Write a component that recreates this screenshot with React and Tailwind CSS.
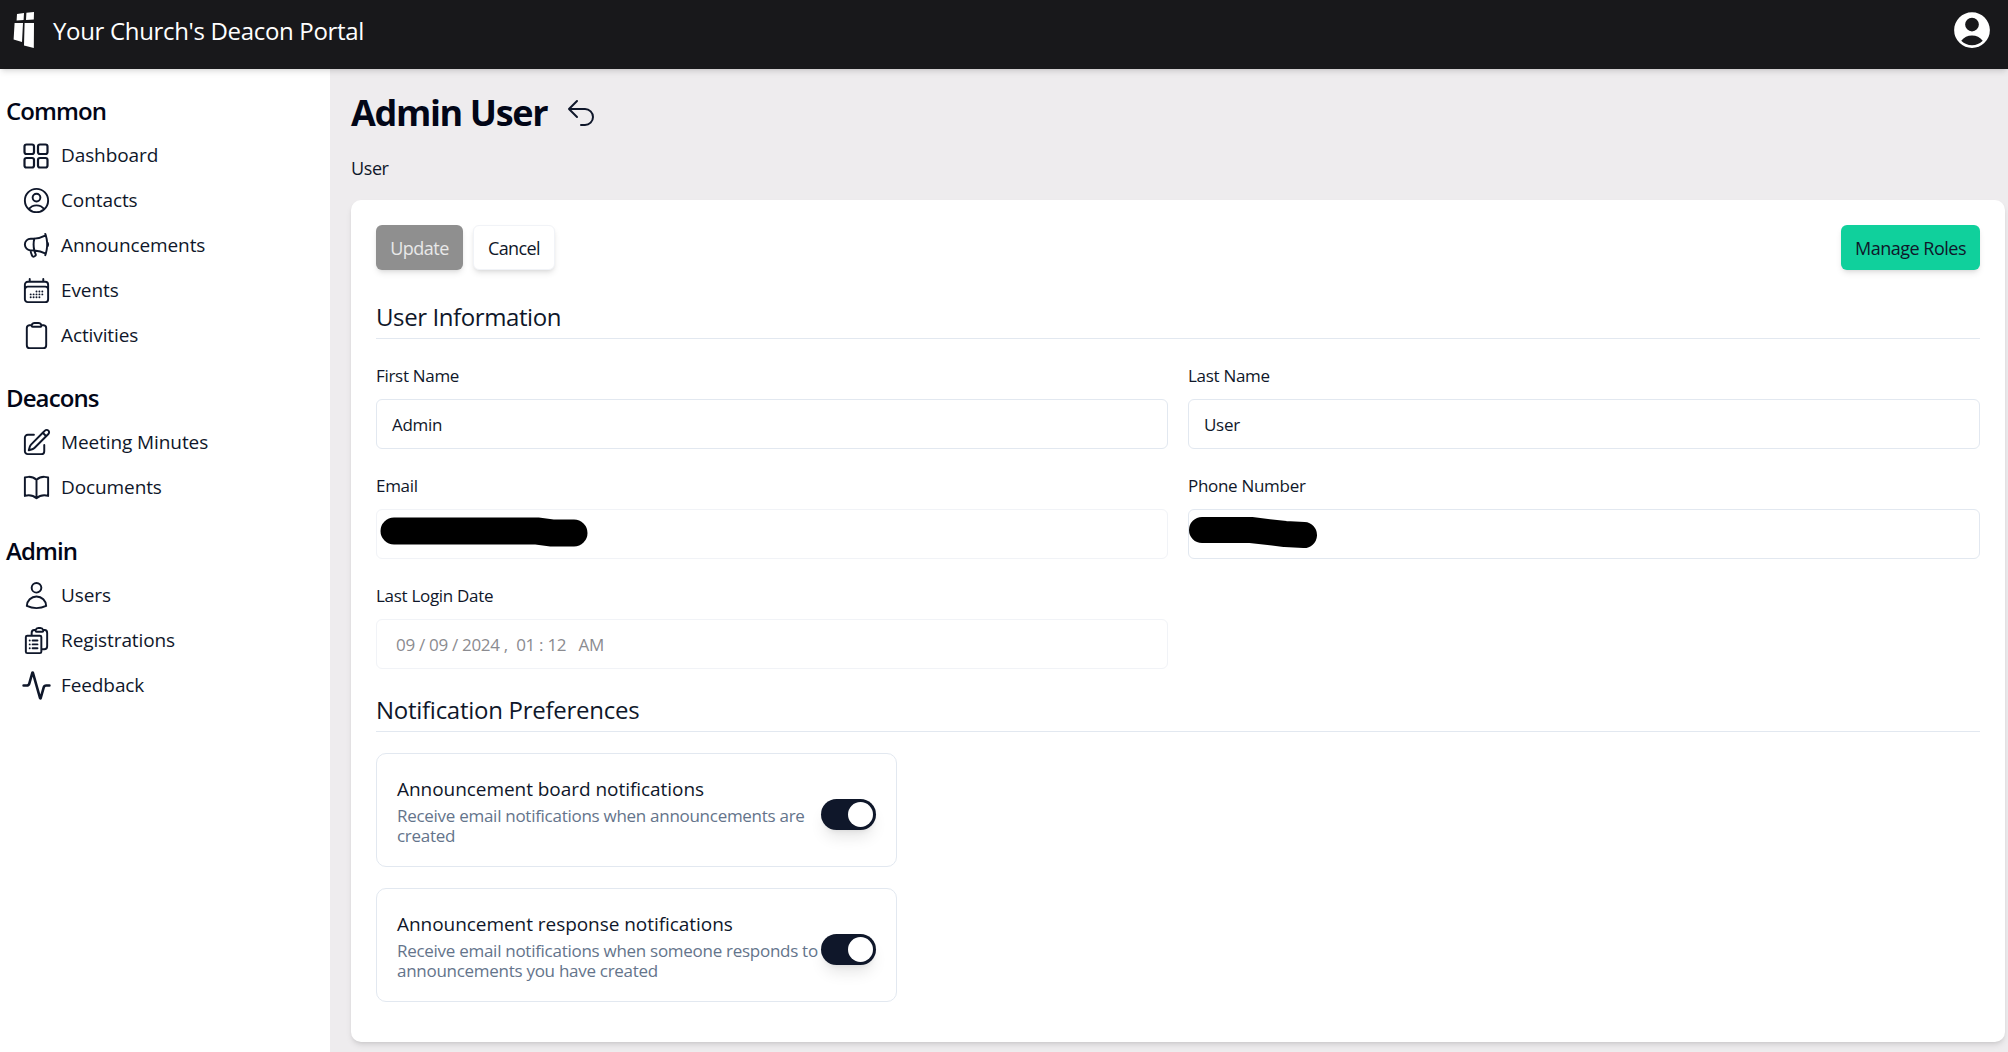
import React from "react";
import { HiOutlineUserCircle, HiOutlineMegaphone, HiOutlineCalendarDays, HiOutlineClipboard, HiOutlinePencilSquare, HiOutlineBookOpen, HiOutlineUser, HiOutlineClipboardDocumentList, HiOutlineArrowUturnLeft, HiUserCircle } from "react-icons/hi2";
import { Activity } from "lucide-react";

function DashIcon() {
  return (
    <svg width="28" height="28" viewBox="0 0 28 28" fill="none" stroke="currentColor" strokeWidth="2.2">
      <rect x="2.5" y="2.5" width="9.5" height="9.5" rx="2" />
      <rect x="16" y="2.5" width="9.5" height="9.5" rx="2" />
      <rect x="2.5" y="16" width="9.5" height="9.5" rx="2" />
      <rect x="16" y="16" width="9.5" height="9.5" rx="2" />
    </svg>
  );
}

const groups = [
  { title: "Common", cls: "mt-[20px]", items: [
    ["Dashboard", DashIcon], ["Contacts", HiOutlineUserCircle], ["Announcements", HiOutlineMegaphone], ["Events", HiOutlineCalendarDays], ["Activities", HiOutlineClipboard] ] },
  { title: "Deacons", cls: "mt-[18px]", items: [ ["Meeting Minutes", HiOutlinePencilSquare], ["Documents", HiOutlineBookOpen] ] },
  { title: "Admin", cls: "mt-[19px]", items: [ ["Users", HiOutlineUser], ["Registrations", HiOutlineClipboardDocumentList], ["Feedback", Activity] ] },
];

function Field({ label, value, disabled, light, children }) {
  return (
    <div className="flex flex-col">
      <label className="text-[17px] leading-[24px] text-[#0f172a] tracking-[-0.3px]">{label}</label>
      <div className={`relative mt-[11px] h-[50px] rounded-[6px] border bg-white flex items-center pt-[2px] px-[15px] text-[17px] tracking-[-0.3px] whitespace-pre ${disabled ? "border-[#f1f3f7] text-[#8b8b90] pl-[19px]" : light ? "border-[#f1f3f7] text-[#0f172a]" : "border-[#e2e8f0] text-[#0f172a]"}`}>
        {value}
        {children}
      </div>
    </div>
  );
}

function Pref({ title, desc, mt }) {
  return (
    <div className={`relative rounded-[10px] border border-[#e2e8f0] ${mt} w-[521px] h-[114px] pl-[20px] pt-[2px] flex flex-col justify-center`}>
      <div className="text-[19px] leading-[26px] text-[#0f172a] tracking-[-0.05px] mb-[4px]">{title}</div>
      <div className="text-[17px] leading-[20px] text-[#64748b] w-[428px] tracking-[-0.28px]">{desc}</div>
      <div className="absolute right-[20px] top-[45px] h-[31px] w-[55px] rounded-full bg-[#0f172a] shadow-lg">
        <div className="absolute right-[3px] top-[3px] h-[25px] w-[25px] rounded-full bg-white" />
      </div>
    </div>
  );
}

export default function App() {
  return (
    <div className="h-screen w-full flex flex-col overflow-hidden bg-white font-['Open_Sans','Noto_Sans',sans-serif] text-[#0f172a]">
      <header className="relative z-10 h-[69px] shrink-0 bg-[#18181b] shadow-md flex items-center justify-between pl-[13px] pr-[14px]">
        <div className="flex items-center">
          <svg width="24" height="38" viewBox="0 0 24 38" className="mb-[8px]">
            <path d="M4 2 L11 1 L10.6 8 L3.6 8.4 Z M13.4 0.8 L21 0 L20.8 7.6 L13 8 Z M1.6 11 L10 11 L9 30 L0.6 27.4 Z M11.6 11 L21 11 L20.8 36 L11 33.4 Z" fill="#fff" />
          </svg>
          <span className="ml-[16px] mb-[8px] text-[24px] leading-[32px] text-white tracking-[-0.33px]">Your Church's Deacon Portal</span>
        </div>
        <HiUserCircle className="text-white mb-[10px]" size={44} />
      </header>
      <div className="flex-1 flex min-h-0">
        <aside className="w-[330px] shrink-0 bg-white flex flex-col pl-[6px]">
          {groups.map((g) => (
            <div key={g.title} className={g.cls}>
              <div className="text-[24px] leading-[44px] font-semibold text-[#020617] tracking-[-0.9px]">{g.title}</div>
              {g.items.map(([name, Icon]) => (
                <div key={name} className="h-[45px] flex items-center pl-[16px] text-[#0f172a]">
                  <span className="w-[28px] h-[28px] flex items-center justify-center"><Icon size={31} className="shrink-0" /></span>
                  <span className="ml-[11px] text-[19px] tracking-[-0.1px]">{name}</span>
                </div>
              ))}
            </div>
          ))}
        </aside>
        <main className="flex-1 bg-[#eeecee] pl-[21px] pr-[3px] flex flex-col">
          <div className="flex items-center h-[48px] mt-[20px]">
            <h1 className="text-[36px] leading-[48px] font-bold text-[#020617] tracking-[-1.35px]">Admin User</h1>
            <HiOutlineArrowUturnLeft size={32} className="ml-[18px]" />
          </div>
          <div className="text-[18px] leading-[26px] mt-[18px] tracking-[-0.4px]">User</div>
          <section className="mt-[19px] h-[842px] rounded-[10px] bg-white shadow-md px-[25px] pt-[25px]">
            <div className="flex items-start justify-between">
              <div className="flex gap-[10px]">
                <button className="h-[45px] w-[87px] pt-[2px] rounded-[6px] bg-[#8f8f8f] text-white/80 text-[18px] tracking-[-0.5px] shadow-md">Update</button>
                <button className="h-[45px] w-[82px] pt-[2px] rounded-[6px] border border-[#f1f3f7] bg-white text-[18px] tracking-[-0.6px] shadow-md">Cancel</button>
              </div>
              <button className="h-[45px] w-[139px] pt-[2px] rounded-[6px] bg-[#10d09c] text-[18px] text-[#0f172a] tracking-[-0.5px] shadow-md">Manage Roles</button>
            </div>
            <h2 className="mt-[31px] pb-[4px] border-b border-[#e2e8f0] text-[24px] leading-[32px] h-[33px] box-content tracking-[-0.4px]">User Information</h2>
            <div className="mt-[25px] grid grid-cols-2 gap-x-[20px] gap-y-[25px]">
              <Field label="First Name" value="Admin" />
              <Field label="Last Name" value="User" />
              <Field label="Email" value="" light>
                <svg width="220" height="48" viewBox="0 0 220 48" className="absolute left-0 top-0" fill="none">
                  <path d="M17 21 L160 21 L175 23 L197 23" stroke="#000" strokeWidth="27" strokeLinecap="round" strokeLinejoin="round" />
                </svg>
              </Field>
              <Field label="Phone Number" value="">
                <svg width="140" height="48" viewBox="0 0 140 48" className="absolute left-0 top-0" fill="none">
                  <path d="M13 20 L62 20 L96 24 L115 25" stroke="#000" strokeWidth="26" strokeLinecap="round" strokeLinejoin="round" />
                </svg>
              </Field>
              <Field label="Last Login Date" value="09 / 09 / 2024 ,  01 : 12   AM" disabled />
            </div>
            <h2 className="mt-[25px] pb-[5px] border-b border-[#e2e8f0] text-[24px] leading-[32px] tracking-[-0.27px]">Notification Preferences</h2>
            <Pref mt="mt-[21px]" title="Announcement board notifications" desc="Receive email notifications when announcements are created" />
            <Pref mt="mt-[21px]" title="Announcement response notifications" desc="Receive email notifications when someone responds to announcements you have created" />
          </section>
        </main>
      </div>
    </div>
  );
}
